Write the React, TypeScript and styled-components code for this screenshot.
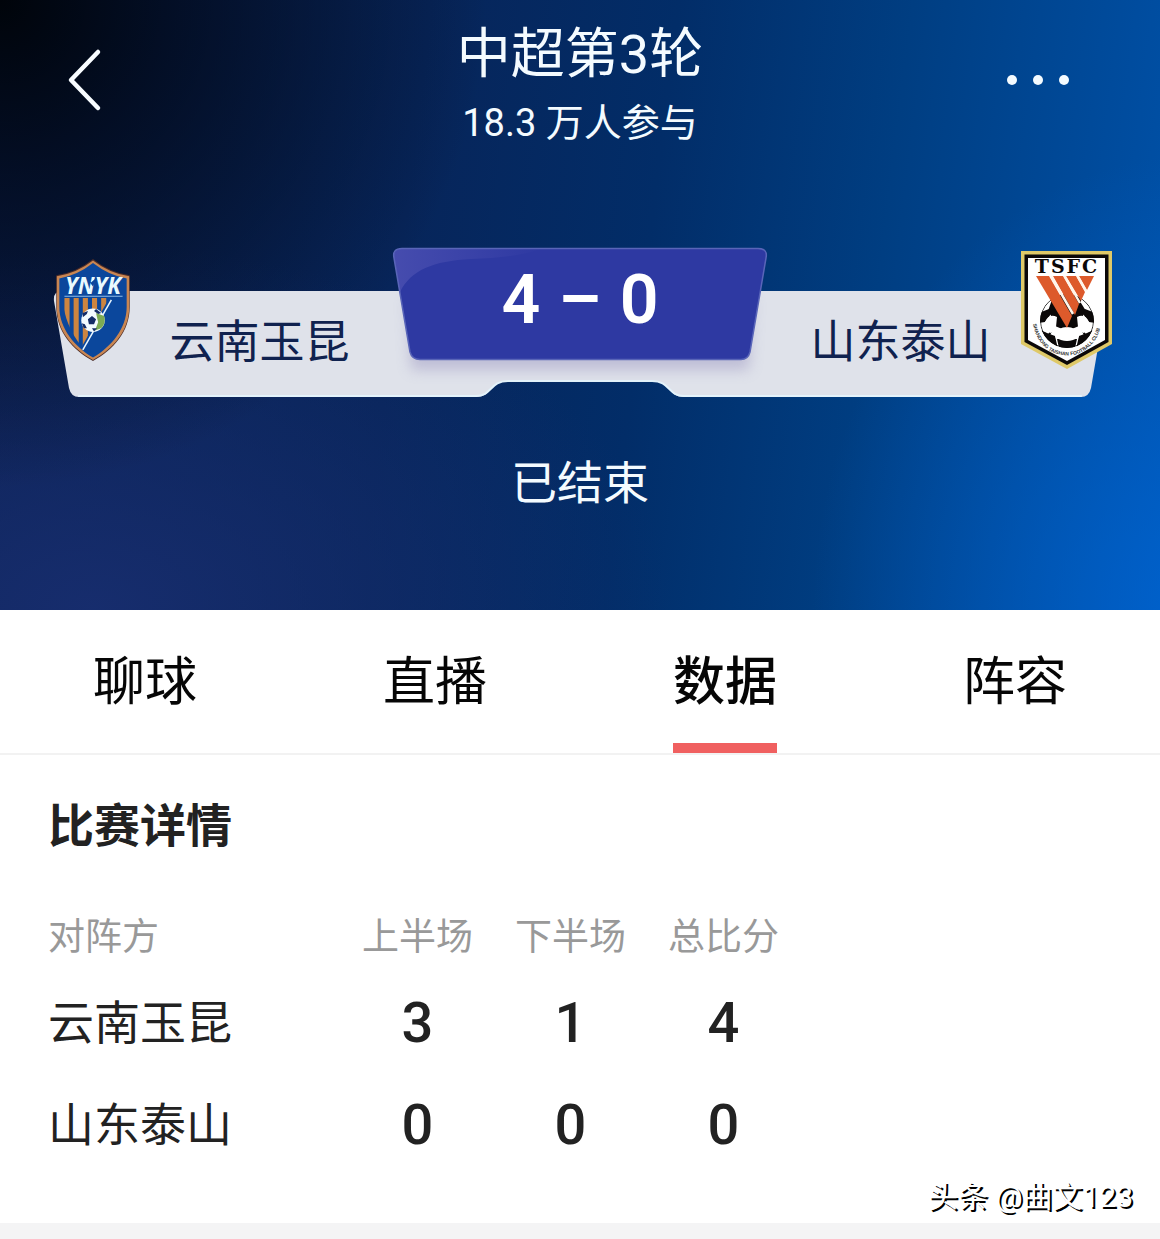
import React, { useState } from "react";
import styled, { createGlobalStyle } from "styled-components";

const fontStack = `Roboto, "Noto Sans CJK SC", sans-serif`;

const GlobalStyle = createGlobalStyle`
  *, *::before, *::after { box-sizing: border-box; }
  body {
    margin: 0;
    background: #fff;
    color: #222;
    font-family: ${fontStack};
  }
  button { font-family: inherit; }
`;

const Page = styled.div`
  display: flex;
  flex-direction: column;
`;

/* ---------- hero ---------- */

const Hero = styled.header`
  display: flex;
  flex-direction: column;
  padding: 21px 46px 97px;
  color: #f4fbff;
  background:
    radial-gradient(ellipse 42% 80% at 0% 0%, #00040a 0%, rgba(0, 6, 18, 0.7) 35%, rgba(0, 8, 24, 0) 100%),
    radial-gradient(ellipse 50% 60% at 8% 100%, rgba(24, 46, 112, 0.9) 0%, rgba(22, 44, 108, 0) 100%),
    radial-gradient(ellipse 34% 75% at 104% 100%, rgba(0, 104, 220, 0.7) 0%, rgba(0, 96, 208, 0) 100%),
    linear-gradient(97deg, #0b2050 0%, #07255a 35%, #022d68 55%, #003e82 74%, #0052aa 100%);
`;

const TopBar = styled.div`
  display: grid;
  grid-template-columns: 76px 1fr 76px;
  align-items: start;
`;

const IconButton = styled.button`
  display: flex;
  align-items: center;
  justify-content: center;
  width: 76px;
  height: 118px;
  padding: 0;
  border: 0;
  background: none;
  color: inherit;
  cursor: pointer;
`;

const MoreButton = styled(IconButton)`
  justify-content: flex-start;
  margin-left: -32px;
`;

const Heading = styled.div`
  display: flex;
  flex-direction: column;
  align-items: center;
  gap: 8px;
`;

const Title = styled.h1`
  margin: 0;
  font-size: 54px;
  line-height: 68px;
  font-weight: 400;
`;

const Subtitle = styled.p`
  margin: 0;
  font-size: 38px;
  line-height: 52px;
`;

const Board = styled.section`
  position: relative;
  isolation: isolate;
  display: grid;
  grid-template-columns: 1fr 374px 1fr;
  height: 149px;
  margin-top: 99px;
`;

const BoardShape = styled.svg`
  position: absolute;
  inset: 0;
  z-index: -1;
  width: 100%;
  height: 100%;
  overflow: visible;
`;

const Team = styled.div<{ $mirrored?: boolean }>`
  display: flex;
  flex-direction: ${(p) => (p.$mirrored ? "row-reverse" : "row")};
  align-items: flex-start;
`;

const Emblem = styled.div`
  display: flex;
  align-items: center;
  justify-content: center;
  width: 94px;
  height: 124px;
`;

const TeamName = styled.span<{ $mirrored?: boolean }>`
  flex: 1;
  padding: ${(p) => (p.$mirrored ? "65px 0 0 14px" : "65px 14px 0 0")};
  color: #10224f;
  font-size: 45px;
  line-height: 60px;
  text-align: center;
`;

const Score = styled.div`
  position: relative;
  isolation: isolate;
  display: flex;
  align-items: center;
  justify-content: center;
  gap: 18px;
  height: 112px;
  padding-bottom: 8px;
  color: #fff;
  font-size: 68px;
  line-height: 80px;
  font-weight: 600;
`;

const Status = styled.p`
  margin: 56px 0 0;
  font-size: 46px;
  line-height: 60px;
  text-align: center;
`;

/* ---------- tabs ---------- */

const Tabs = styled.nav`
  display: grid;
  grid-template-columns: repeat(4, 1fr);
  border-bottom: 2px solid #f2f2f2;
`;

const Tab = styled.button`
  display: flex;
  justify-content: center;
  padding: 0;
  border: 0;
  background: none;
  cursor: pointer;
`;

const TabLabel = styled.span<{ $active: boolean }>`
  padding: 42px 0 29px;
  border-bottom: 10px solid ${(p) => (p.$active ? "#f06060" : "transparent")};
  color: #060606;
  font-size: 52px;
  line-height: 62px;
  font-weight: ${(p) => (p.$active ? 500 : 400)};
`;

/* ---------- details ---------- */

const Details = styled.main`
  display: flex;
  flex-direction: column;
  padding: 41px 27px 8px 48px;
  border-bottom: 16px solid #f4f4f5;
`;

const SectionTitle = styled.h2`
  margin: 0;
  font-size: 46px;
  line-height: 60px;
  font-weight: 700;
`;

const Table = styled.table`
  width: 752px;
  max-width: 100%;
  margin-top: 48px;
  border-collapse: collapse;
  table-layout: fixed;
`;

const NameCol = styled.col`
  width: 293px;
`;

const HeadCell = styled.th<{ $left?: boolean }>`
  height: 68px;
  padding: 0;
  color: #999;
  font-size: 37px;
  line-height: 48px;
  font-weight: 400;
  text-align: ${(p) => (p.$left ? "left" : "center")};
`;

const TeamCell = styled.th`
  height: 102px;
  padding: 0;
  font-size: 46px;
  line-height: 60px;
  font-weight: 400;
  text-align: left;
`;

const ValueCell = styled.td`
  height: 102px;
  padding: 0;
  font-size: 56px;
  line-height: 60px;
  font-weight: 500;
  text-align: center;
`;

const Credit = styled.p`
  align-self: flex-end;
  margin: 3px 0 0;
  color: #fff;
  font-size: 30px;
  line-height: 36px;
  text-shadow: 2px 2px 0 #000;
`;

/* ---------- drawings ---------- */

const Chevron = () => (
  <svg width="36" height="64" viewBox="0 0 36 64" fill="none" aria-hidden="true">
    <path d="M32 4 5 32 32 60" stroke="#f8fcff" strokeWidth="4.5" strokeLinecap="round" strokeLinejoin="round" />
  </svg>
);

const Dots = () => (
  <svg width="64" height="12" viewBox="0 0 64 12" fill="#f4fbff" aria-hidden="true">
    <circle cx="6" cy="6" r="5" />
    <circle cx="32" cy="6" r="5" />
    <circle cx="58" cy="6" r="5" />
  </svg>
);

const Plate = () => (
  <BoardShape viewBox="0 0 1068 149" preserveAspectRatio="none" aria-hidden="true">
    <path
      d="M16 43H1052Q1061 43 1060 53L1045 140Q1043 149 1035 149H638C622 149 624 133 606 133H462C444 133 446 149 430 149H33Q25 149 23 140L8 53Q7 43 16 43Z"
      fill="#dfe2ea"
    />
    <path
      d="M1035 148H638C622 148 624 133 606 133H462C444 133 446 148 430 148H33"
      fill="none"
      stroke="#e4f3fb"
      strokeWidth="2"
      strokeLinecap="round"
    />
  </BoardShape>
);

const ScorePlate = () => (
  <BoardShape viewBox="0 0 374 112" preserveAspectRatio="none" aria-hidden="true">
    <defs>
      <filter id="soft" x="-10%" y="-10%" width="120%" height="140%">
        <feGaussianBlur stdDeviation="7" />
      </filter>
      <linearGradient id="gloss" x1="0" y1="0" x2="1" y2="0">
        <stop offset="0" stopColor="#464cae" />
        <stop offset="1" stopColor="#2e39a2" />
      </linearGradient>
    </defs>
    <path d="M14 50H360L356 122H18Z" fill="#8d86b8" opacity="0.4" filter="url(#soft)" />
    <path d="M9 .5H365Q375 .5 373 10L357 104Q355 111.500 348 111.500H27Q19 111.500 17 104L1 10Q-1 .5 9 .5Z" fill="#2e39a2" />
    <path d="M9 .5H150Q122 10 78 11C40 13 18 22 7 44L1 10Q-1 .5 9 .5Z" fill="url(#gloss)" />
    <path
      d="M9 .5H365Q375 .5 373 10L357 104Q355 111.500 348 111.500H27Q19 111.500 17 104L1 10Q-1 .5 9 .5Z"
      fill="none"
      stroke="#5965b8"
      strokeWidth="1.500"
    />
  </BoardShape>
);

const YunnanCrest = () => (
  <svg width="76" height="102" viewBox="1 1 74 100" role="img" aria-label="云南玉昆">
    <defs>
      <clipPath id="ynStripes">
        <path d="M8 39H54L27 87Q10 66 8 39Z" />
      </clipPath>
    </defs>
    <path d="M38 1Q54 14 74 17V48C74 72 58 90 38 101C18 90 2 72 2 48V17Q22 14 38 1Z" fill="#4c2c28" />
    <path d="M38 2.500Q54 15 73.500 18V48C73.500 71 58 89 38 100C18 89 2.500 71 2.500 48V18Q22 15 38 2.500Z" fill="#c98652" />
    <path d="M38 5Q54 17.500 71 20V48C71 69 56 87 38 97.500C20 87 5 69 5 48V20Q22 17.500 38 5Z" fill="#0b479c" />
    <g clipPath="url(#ynStripes)" fill="#cd8540">
      <path d="M10 39h5v50h-5zM19 39h5v50h-5zM28 39h5v50h-5zM37 39h5v50h-5zM46 39h5v50h-5z" />
    </g>
    <path d="M10 37.500H67" stroke="#8fbde8" strokeWidth="1" />
    <path d="M56 41 28 90" stroke="#e9f7ff" strokeWidth="1.500" />
    <text x="38" y="35" textAnchor="middle" fontFamily="Open Sans, sans-serif" fontSize="22" fontWeight="700" fontStyle="italic" fill="#e9fbff">
      YNYK
    </text>
    <path d="M31 19 36 24 42 19 38 28Z" fill="#0b479c" />
    <circle cx="38" cy="61" r="11.500" fill="#f3fbff" />
    <path d="M41 54 49 57Q51 64 46 69L40 71 43 63Z" fill="#7cab54" />
    <path d="m37 57 4 3-2 5h-5l-1-5zM28 54l5-2-1 3-4 3zM41 50l5 4-3 1-4-3zM27 64l3 1 2 4-3 0zM37 69l5 0-3 3z" fill="#152c66" />
  </svg>
);

const TaishanCrest = () => (
  <svg width="92" height="118" viewBox="0 0 92 118" role="img" aria-label="山东泰山">
    <defs>
      <path id="tsArc" d="M12 73C19 115 73 115 80 73" />
      <clipPath id="tsBall">
        <circle cx="46" cy="70" r="27" />
      </clipPath>
    </defs>
    <path d="M0 0H91V93L46 118 0 93Z" fill="#dfc968" />
    <path d="M3.500 3.500H87.500V91L46 114 3.500 91Z" fill="#0b0808" />
    <path d="M7 7H84V89L46 110 7 89Z" fill="#fff" />
    <g clipPath="url(#tsBall)" fill="#0b0808">
      <circle cx="46" cy="70" r="26.500" fill="#fff" stroke="#222" strokeWidth="1" />
      <path d="M33 43H60L60 52 65 60 61 66 58 75 46 80 34 75 31 66 27 60Z" />
      <path d="M18 62 28 58 30 63 24 71 18 72ZM74 62 64 58 62 63 68 71 74 72ZM20 79 26 82 34 85 37 98 28 94ZM72 79 66 82 58 85 55 98 64 94ZM36 88H56L54 97H38Z" />
      <path d="M33 74 28 84M59 74 64 84" stroke="#0b0808" strokeWidth="2" />
      <path d="M38 78Q46 74 54 78L58 86Q46 94 34 86Z" fill="#fff" />
      <path d="M24 71Q28 62 36 66L35 76 30 82 22 80ZM68 71Q64 62 56 66L57 76 62 82 70 80Z" fill="#fff" />
    </g>
    <g fill="#dd5a2b">
      <path d="M58 25H73L66 39Z" />
      <path d="M45 25H55L64 41 60 50Z" />
      <path d="M32 25H42L58 53 54 64Z" />
      <path d="M15 25H28L51 65 46 77Z" />
    </g>
    <path d="M30 25 52 63M43.500 25 59 52M56.500 25 65 40" stroke="#fff6ea" strokeWidth="2.500" />
    <text x="46" y="22" textAnchor="middle" fontFamily="DejaVu Serif, serif" fontSize="19" fontWeight="700" letterSpacing="2" fill="#0b0808">
      TSFC
    </text>
    <text fontFamily="Liberation Sans, sans-serif" fontSize="5" fontWeight="700" fill="#333">
      <textPath href="#tsArc">SHANDONG TAISHAN FOOTBALL CLUB</textPath>
    </text>
  </svg>
);

/* ---------- content ---------- */

const tabs = ["聊球", "直播", "数据", "阵容"];
const columns = ["上半场", "下半场", "总比分"];
const results = [
  { team: "云南玉昆", values: [3, 1, 4] },
  { team: "山东泰山", values: [0, 0, 0] },
];

export default function App() {
  const [active, setActive] = useState("数据");

  return (
    <Page>
      <GlobalStyle />
      <Hero>
        <TopBar>
          <IconButton type="button" aria-label="返回">
            <Chevron />
          </IconButton>
          <Heading>
            <Title>中超第3轮</Title>
            <Subtitle>18.3 万人参与</Subtitle>
          </Heading>
          <MoreButton type="button" aria-label="更多">
            <Dots />
          </MoreButton>
        </TopBar>

        <Board>
          <Plate />
          <Team>
            <Emblem>
              <YunnanCrest />
            </Emblem>
            <TeamName>云南玉昆</TeamName>
          </Team>
          <Score>
            <ScorePlate />
            <span>4</span>
            <span>–</span>
            <span>0</span>
          </Score>
          <Team $mirrored>
            <Emblem>
              <TaishanCrest />
            </Emblem>
            <TeamName $mirrored>山东泰山</TeamName>
          </Team>
        </Board>

        <Status>已结束</Status>
      </Hero>

      <Tabs>
        {tabs.map((tab) => (
          <Tab key={tab} type="button" aria-pressed={tab === active} onClick={() => setActive(tab)}>
            <TabLabel $active={tab === active}>{tab}</TabLabel>
          </Tab>
        ))}
      </Tabs>

      <Details>
        <SectionTitle>比赛详情</SectionTitle>
        <Table>
          <colgroup>
            <NameCol />
            <col />
            <col />
            <col />
          </colgroup>
          <thead>
            <tr>
              <HeadCell scope="col" $left>
                对阵方
              </HeadCell>
              {columns.map((column) => (
                <HeadCell key={column} scope="col">
                  {column}
                </HeadCell>
              ))}
            </tr>
          </thead>
          <tbody>
            {results.map((row) => (
              <tr key={row.team}>
                <TeamCell scope="row">{row.team}</TeamCell>
                {row.values.map((value, i) => (
                  <ValueCell key={columns[i]}>{value}</ValueCell>
                ))}
              </tr>
            ))}
          </tbody>
        </Table>
        <Credit>头条 @曲文123</Credit>
      </Details>
    </Page>
  );
}
